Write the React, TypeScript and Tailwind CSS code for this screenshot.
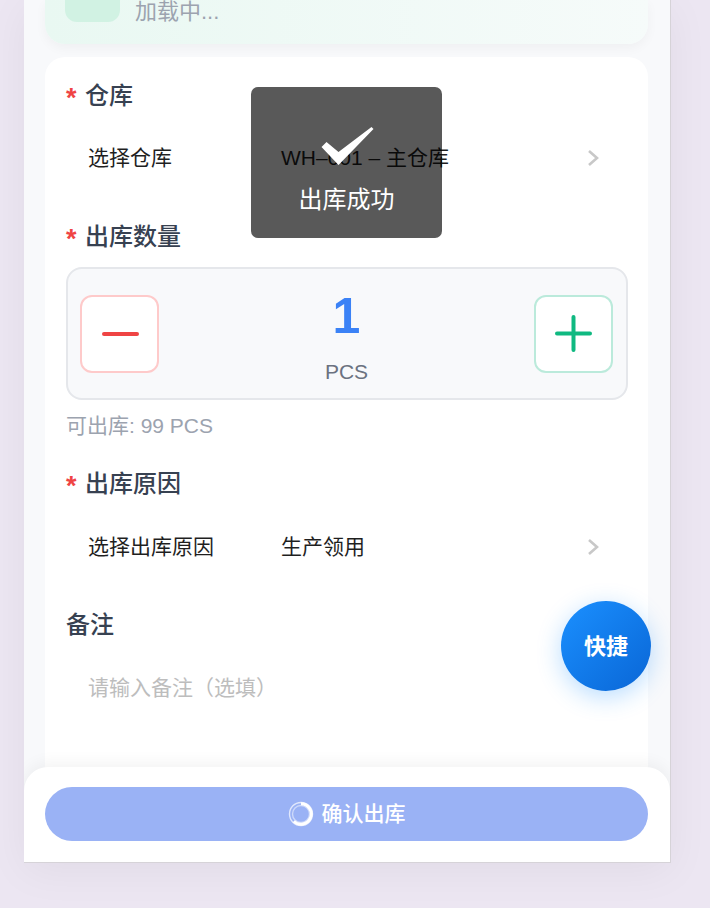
const font = "font-['Liberation_Sans','Noto_Sans_CJK_SC',sans-serif]";

function Label({ text, required }: { text: string; required?: boolean }) {
  return (
    <div className="flex h-[28px] items-center text-[24px] font-medium leading-[28px] text-[#374151]">
      {required && <span className="mr-[6px] mt-[3px] w-[13px] text-[27px] font-bold text-[#ef4444]">*</span>}
      <span>{text}</span>
    </div>
  );
}

function SelectRow({ title, value, tall }: { title: string; value: string; tall?: boolean }) {
  return (
    <div className={`flex items-center pl-[22px] pr-[29px] text-[21px] text-[#1f1f1f] ${tall ? "h-[98px]" : "h-[96px]"}`}>
      <span className="w-[193px] shrink-0">{title}</span>
      <span className="flex-1">{value}</span>
      <svg width="12" height="18" viewBox="0 0 12 18" fill="none">
        <path d="M2 2l8 7-8 7" stroke="#c8c8c8" strokeWidth="2.6" />
      </svg>
    </div>
  );
}

function StepButton({ border, children }: { border: string; children: React.ReactNode }) {
  return (
    <div className={`flex h-[78px] w-[79px] items-center justify-center rounded-[12px] border-2 bg-white ${border}`}>
      {children}
    </div>
  );
}

export default function App() {
  return (
    <div className={`h-[908px] overflow-hidden bg-[#ece6f2] pl-[24px] ${font}`}>
      <div className="relative h-[863px] w-[647px] overflow-hidden border-b border-r border-[#d6d3d8] bg-[#f8f9fb] shadow-[0_8px_40px_rgba(0,0,0,0.05)]">
        {/* top card, scrolled off */}
        <div className="ml-[21px] mr-[22px] flex h-[44px] items-end gap-[15px] overflow-hidden rounded-b-[20px] bg-gradient-to-r from-[#e9f8f2] to-[#f6fbfa] pb-[18px] pl-[20px] shadow-[0_4px_12px_rgba(0,0,0,0.04)]">
          <div className="mb-[4px] h-[40px] w-[55px] shrink-0 rounded-[12px] bg-[#d1f2e3]" />
          <span className="text-[22px] leading-[28px] text-[#9ca3af]">加载中...</span>
        </div>

        {/* form */}
        <div className="ml-[21px] mr-[22px] mt-[13px] rounded-[20px] bg-white pb-[100px] pl-[21px] pr-[20px] pt-[25px]">
          <Label text="仓库" required />
          <SelectRow title="选择仓库" value="WH–001 – 主仓库" />

          <div className="mt-[17px]">
            <Label text="出库数量" required />
          </div>
          <div className="mt-[16px] flex h-[133px] items-center justify-between rounded-[16px] border-2 border-[#e5e7eb] bg-[#f8f9fb] pl-[12px] pr-[13px]">
            <StepButton border="border-[#fecaca]">
              <div className="ml-[2px] h-[4px] w-[37px] rounded-full bg-[#ef4444]" />
            </StepButton>
            <div className="flex flex-col items-center pt-[4px]">
              <span className="text-[50px] font-bold leading-[58px] text-[#3b82f6]">1</span>
              <span className="mt-[14px] text-[21px] leading-[26px] text-[#6b7280]">PCS</span>
            </div>
            <StepButton border="border-[#bbeadb]">
              <svg width="37" height="37" viewBox="0 0 37 37" fill="none">
                <path d="M2 18.5h33M18.5 2v33" stroke="#10b981" strokeWidth="4" strokeLinecap="round" />
              </svg>
            </StepButton>
          </div>
          <div className="mt-[13px] text-[21px] leading-[26px] text-[#9ca3af]">可出库: 99 PCS</div>

          <div className="mt-[31px]">
            <Label text="出库原因" required />
          </div>
          <SelectRow title="选择出库原因" value="生产领用" tall />

          <div className="mt-[15px]">
            <Label text="备注" />
          </div>
          <div className="flex h-[98px] items-center pl-[22px] text-[21px] text-[#bdbdbd]">请输入备注（选填）</div>
        </div>

        {/* floating shortcut */}
        <div className="absolute left-[537px] top-[601px] flex h-[90px] w-[90px] items-center justify-center rounded-full bg-gradient-to-br from-[#1b90ff] to-[#0a66d6] text-[22px] font-bold text-white shadow-[0_6px_24px_rgba(24,144,255,0.3)]">
          快捷
        </div>

        {/* bottom bar */}
        <div className="absolute bottom-0 left-0 right-0 h-[95px] rounded-t-[24px] bg-white pl-[21px] pr-[22px] pt-[20px] shadow-[0_-4px_16px_rgba(0,0,0,0.05)]">
          <div className="flex h-[54px] items-center justify-center gap-[8px] rounded-full bg-[#9ab2f5] text-[21px] font-medium text-white">
            <svg width="26" height="26" viewBox="0 0 26 26" fill="none">
              <circle cx="13" cy="13" r="11.5" stroke="#ffffff" strokeOpacity="0.7" strokeWidth="1.4" />
              <circle cx="13" cy="13" r="8.5" stroke="#ffffff" strokeOpacity="0.5" strokeWidth="1.4" />
              <path d="M13 2.8A10.2 10.2 0 1 1 5.8 20.2" stroke="#ffffff" strokeWidth="3" />
            </svg>
            <span>确认出库</span>
          </div>
        </div>

        {/* toast */}
        <div className="absolute left-[227px] top-[87px] flex h-[151px] w-[191px] flex-col items-center rounded-[7px] bg-[rgba(0,0,0,0.65)] pt-[38px] text-white">
          <svg width="54" height="42" viewBox="0 0 54 42">
            <path d="M1.5 22L6.5 17L18.5 27L51.5 2L53.5 4L18.5 40Z" fill="#ffffff" />
          </svg>
          <span className="mt-[19px] text-[24px] leading-[28px]">出库成功</span>
        </div>
      </div>
    </div>
  );
}
